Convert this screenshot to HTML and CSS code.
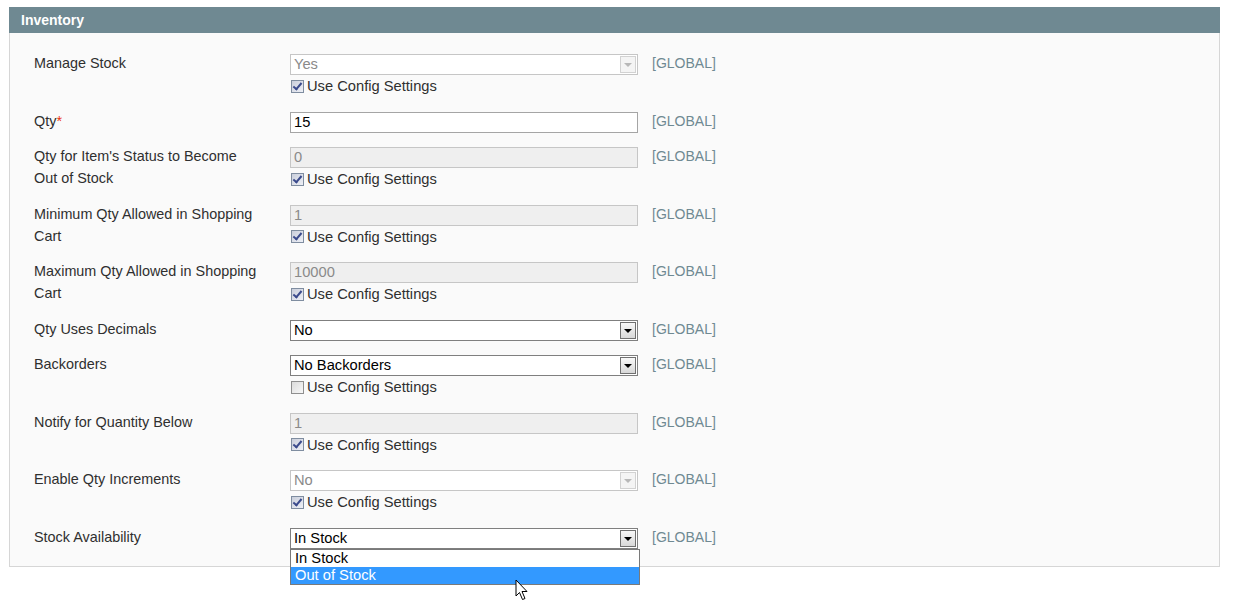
FILE: index.html
```html
<!DOCTYPE html>
<html>
<head>
	<title>Inventory</title>
	<meta charset="utf-8"/>
	<link rel="stylesheet" href="styles.css">
</head>
<body>

<div class="entry-edit">
	<div class="head">
		<h4>Inventory</h4>
	</div>
	<div class="fieldset">
		<div class="row">
			<div class="label">Manage Stock</div>
			<div class="value">
				<div class="select disabled"><span>Yes</span><i class="arrow"></i></div>
				<div class="use-default"><span class="cb checked"></span>Use Config Settings</div>
			</div>
			<div class="scope">[GLOBAL]</div>
		</div>
		<div class="row">
			<div class="label">Qty<span class="required">*</span></div>
			<div class="value">
				<div class="input-text">15</div>
			</div>
			<div class="scope">[GLOBAL]</div>
		</div>
		<div class="row">
			<div class="label">Qty for Item's Status to Become Out of Stock</div>
			<div class="value">
				<div class="input-text disabled">0</div>
				<div class="use-default"><span class="cb checked"></span>Use Config Settings</div>
			</div>
			<div class="scope">[GLOBAL]</div>
		</div>
		<div class="row">
			<div class="label">Minimum Qty Allowed in Shopping Cart</div>
			<div class="value">
				<div class="input-text disabled">1</div>
				<div class="use-default"><span class="cb checked"></span>Use Config Settings</div>
			</div>
			<div class="scope">[GLOBAL]</div>
		</div>
		<div class="row">
			<div class="label">Maximum Qty Allowed in Shopping Cart</div>
			<div class="value">
				<div class="input-text disabled">10000</div>
				<div class="use-default"><span class="cb checked"></span>Use Config Settings</div>
			</div>
			<div class="scope">[GLOBAL]</div>
		</div>
		<div class="row">
			<div class="label">Qty Uses Decimals</div>
			<div class="value">
				<div class="select"><span>No</span><i class="arrow"></i></div>
			</div>
			<div class="scope">[GLOBAL]</div>
		</div>
		<div class="row">
			<div class="label">Backorders</div>
			<div class="value">
				<div class="select"><span>No Backorders</span><i class="arrow"></i></div>
				<div class="use-default"><span class="cb"></span>Use Config Settings</div>
			</div>
			<div class="scope">[GLOBAL]</div>
		</div>
		<div class="row">
			<div class="label">Notify for Quantity Below</div>
			<div class="value">
				<div class="input-text disabled">1</div>
				<div class="use-default"><span class="cb checked"></span>Use Config Settings</div>
			</div>
			<div class="scope">[GLOBAL]</div>
		</div>
		<div class="row">
			<div class="label">Enable Qty Increments</div>
			<div class="value">
				<div class="select disabled"><span>No</span><i class="arrow"></i></div>
				<div class="use-default"><span class="cb checked"></span>Use Config Settings</div>
			</div>
			<div class="scope">[GLOBAL]</div>
		</div>
		<div class="row last">
			<div class="label">Stock Availability</div>
			<div class="value">
				<div class="select open"><span>In Stock</span><i class="arrow"></i></div>
				<ul class="options">
					<li>In Stock</li>
					<li class="active">Out of Stock</li>
				</ul>
			</div>
			<div class="scope">[GLOBAL]</div>
		</div>
	</div>
</div>

<svg class="cursor" width="14" height="22" viewBox="0 0 14 22">
	<path d="M1 1 L1 17 L4.5 13.5 L7.5 20.5 L10 19.5 L7 12.5 L12 12.5 Z" fill="#fff" stroke="#000" stroke-width="1"/>
</svg>

</body>
</html>
```

FILE: styles.css
```css
* {
	margin: 0px;
	padding: 0px;
	box-sizing: border-box;
}

html, body {
	height: 100%;
}
body {
	background-color: #fff;
	font-family: "Liberation Sans", Arial, sans-serif;
	font-size: 14.4px;
	color: #2f2f2f;
}

.entry-edit {
	width: 1211px;
	margin: 7px 0 0 9px;
}
	.head {
		height: 26px;
		background-color: #6f8992;
		padding-left: 12px;
	}
		.head h4 {
			color: #fff;
			font-size: 14px;
			font-weight: bold;
			line-height: 26px;
		}
	.fieldset {
		border: 1px solid #d6d6d6;
		border-top: none;
		background-color: #fafafa;
		padding: 21px 0 17px 24px;
	}

.row {
	display: grid;
	grid-template-columns: 256px 348px auto;
	padding-bottom: 14.5px;
}
.row.last {
	padding-bottom: 0;
}
	.row .label {
		width: 224px;
		line-height: 22px;
		margin-top: -2px;
	}
	.required {
		color: #eb340a;
	}
	.row .value {
		position: relative;
	}
	.row .scope {
		margin-left: 14px;
		color: #6f8992;
		font-size: 14px;
		line-height: 22px;
		margin-top: -2px;
	}

.input-text,
.select {
	position: relative;
	height: 21px;
	line-height: 19px;
	padding-left: 3px;
	font-size: 14.7px;
	color: #000;
	background-color: #fff;
	border: 1px solid #a5a5a5;
}
.select {
	border-color: #7f7f7f;
}
.input-text.disabled,
.select.disabled {
	color: #8a8a8a;
	border-color: #c6c6c6;
}
.input-text.disabled {
	background-color: #efefef;
}
	.select .arrow {
		position: absolute;
		top: 1px;
		right: 1px;
		width: 16px;
		height: 17px;
		border: 1px solid #707070;
		background: linear-gradient(#f8f8f8, #d8d8d8);
	}
	.select .arrow:after {
		content: "";
		position: absolute;
		left: 3px;
		top: 6px;
		border-left: 4px solid transparent;
		border-right: 4px solid transparent;
		border-top: 4px solid #000;
	}
	.select.disabled .arrow {
		border-color: #d2d2d2;
		background: #f4f4f4;
	}
	.select.disabled .arrow:after {
		border-top-color: #b8b8b8;
	}

.options {
	position: absolute;
	left: 0px;
	top: 21px;
	width: 350px;
	list-style: none;
	background-color: #fff;
	border: 1px solid #7a7a7a;
	z-index: 10;
}
	.options li {
		display: block;
		height: 17px;
		line-height: 17px;
		padding-left: 4px;
		font-size: 14.7px;
		color: #000;
	}
	.options .active {
		background-color: #3399ff;
		color: #fff;
	}

.use-default {
	display: flex;
	align-items: center;
	height: 22px;
	padding-left: 1px;
	font-size: 14.7px;
	color: #2f2f2f;
}
	.cb {
		position: relative;
		width: 13px;
		height: 13px;
		margin-right: 3px;
		border: 1px solid #8f8f8f;
		background: linear-gradient(135deg, #dcdcdc, #f8f8f8);
	}
	.cb.checked {
		border-color: #7f8da0;
		background: linear-gradient(135deg, #c9cedb, #eef0f6);
	}
	.cb.checked:after {
		content: "";
		position: absolute;
		left: 3px;
		top: 0px;
		width: 3px;
		height: 7px;
		border-right: 2px solid #3a4a8c;
		border-bottom: 2px solid #3a4a8c;
		transform: rotate(40deg);
	}

.cursor {
	position: absolute;
	left: 515px;
	top: 579px;
	z-index: 20;
}
```
